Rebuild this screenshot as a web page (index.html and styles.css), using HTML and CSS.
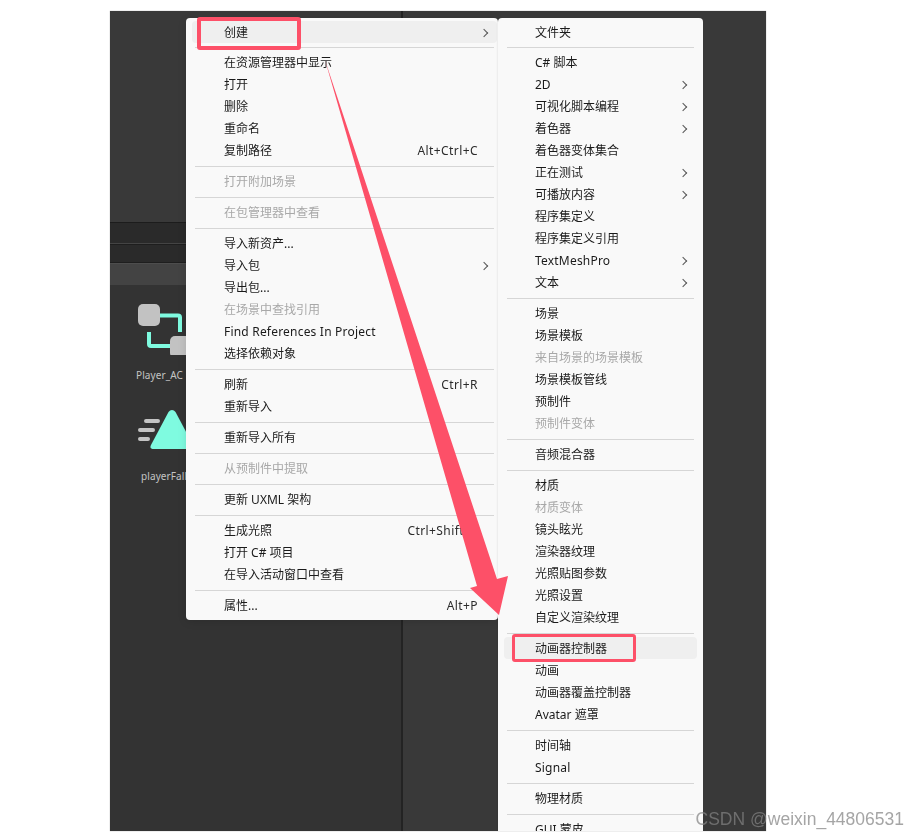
FILE: index.html
```html
<!DOCTYPE html>
<html lang="zh-CN">
<head>
<meta charset="utf-8">
<title>Unity 创建菜单</title>
<link rel="stylesheet" href="styles.css">
</head>
<body>
<main class="shot">
  <div class="editor">
    <div class="bar bar-a"></div>
    <div class="bar bar-b"></div>
    <div class="bar bar-c"></div>
    <div class="pane"></div>
    <div class="divider"></div>
    <figure class="asset asset-ac">
      <svg width="60" height="52" viewBox="0 0 60 52">
        <path d="M20 12.500H41a2 2 0 0 1 2 2V29M12 29V41a2 2 0 0 0 2 2H36" fill="none" stroke="#7ffbe0" stroke-width="4"/>
        <rect x="1" y="1" width="22" height="22" rx="5" fill="#c2c2c2"/>
        <rect x="33" y="33" width="23" height="22" rx="5" fill="#c2c2c2"/>
      </svg>
      <figcaption>Player_AC</figcaption>
    </figure>
    <figure class="asset asset-fall">
      <svg width="60" height="44" viewBox="0 0 60 44">
        <path d="M9 12H21M3 21H16M3 30H11" fill="none" stroke="#c4c4c4" stroke-width="4" stroke-linecap="round"/>
        <path d="M35 1q2 0 3.500 2L56 36q2 4-3 4H17q-5 0-3-4L31.500 3q1.500-2 3.500-2z" fill="#7ffbe0"/>
      </svg>
      <figcaption>playerFall</figcaption>
    </figure>
  </div>

  <nav class="menu menu-left">
    <div class="row row-on"><span>创建</span><i class="chev"></i></div>
    <hr class="sep sep-first">
    <div class="row"><span>在资源管理器中显示</span></div>
    <div class="row"><span>打开</span></div>
    <div class="row"><span>删除</span></div>
    <div class="row"><span>重命名</span></div>
    <div class="row"><span>复制路径</span><kbd>Alt+Ctrl+C</kbd></div>
    <hr class="sep">
    <div class="row off"><span>打开附加场景</span></div>
    <hr class="sep">
    <div class="row off"><span>在包管理器中查看</span></div>
    <hr class="sep">
    <div class="row"><span>导入新资产...</span></div>
    <div class="row"><span>导入包</span><i class="chev"></i></div>
    <div class="row"><span>导出包...</span></div>
    <div class="row off"><span>在场景中查找引用</span></div>
    <div class="row"><span class="latin">Find References In Project</span></div>
    <div class="row"><span>选择依赖对象</span></div>
    <hr class="sep">
    <div class="row"><span>刷新</span><kbd>Ctrl+R</kbd></div>
    <div class="row"><span>重新导入</span></div>
    <hr class="sep">
    <div class="row"><span>重新导入所有</span></div>
    <hr class="sep">
    <div class="row off"><span>从预制件中提取</span></div>
    <hr class="sep">
    <div class="row"><span>更新 UXML 架构</span></div>
    <hr class="sep">
    <div class="row"><span>生成光照</span><kbd>Ctrl+Shift+L</kbd></div>
    <div class="row"><span>打开 C# 项目</span></div>
    <div class="row"><span>在导入活动窗口中查看</span></div>
    <hr class="sep">
    <div class="row"><span>属性...</span><kbd>Alt+P</kbd></div>
  </nav>

  <nav class="menu menu-right">
    <div class="row"><span>文件夹</span></div>
    <hr class="sep sep-first">
    <div class="row"><span>C# 脚本</span></div>
    <div class="row"><span>2D</span><i class="chev"></i></div>
    <div class="row"><span>可视化脚本编程</span><i class="chev"></i></div>
    <div class="row"><span>着色器</span><i class="chev"></i></div>
    <div class="row"><span>着色器变体集合</span></div>
    <div class="row"><span>正在测试</span><i class="chev"></i></div>
    <div class="row"><span>可播放内容</span><i class="chev"></i></div>
    <div class="row"><span>程序集定义</span></div>
    <div class="row"><span>程序集定义引用</span></div>
    <div class="row"><span class="latin">TextMeshPro</span><i class="chev"></i></div>
    <div class="row"><span>文本</span><i class="chev"></i></div>
    <hr class="sep">
    <div class="row"><span>场景</span></div>
    <div class="row"><span>场景模板</span></div>
    <div class="row off"><span>来自场景的场景模板</span></div>
    <div class="row"><span>场景模板管线</span></div>
    <div class="row"><span>预制件</span></div>
    <div class="row off"><span>预制件变体</span></div>
    <hr class="sep">
    <div class="row"><span>音频混合器</span></div>
    <hr class="sep">
    <div class="row"><span>材质</span></div>
    <div class="row off"><span>材质变体</span></div>
    <div class="row"><span>镜头眩光</span></div>
    <div class="row"><span>渲染器纹理</span></div>
    <div class="row"><span>光照贴图参数</span></div>
    <div class="row"><span>光照设置</span></div>
    <div class="row"><span>自定义渲染纹理</span></div>
    <hr class="sep">
    <div class="row row-on"><span>动画器控制器</span></div>
    <div class="row"><span>动画</span></div>
    <div class="row"><span>动画器覆盖控制器</span></div>
    <div class="row"><span>Avatar 遮罩</span></div>
    <hr class="sep">
    <div class="row"><span>时间轴</span></div>
    <div class="row"><span class="latin">Signal</span></div>
    <hr class="sep">
    <div class="row"><span>物理材质</span></div>
    <hr class="sep">
    <div class="row"><span>GUI 蒙皮</span></div>
  </nav>

  <svg class="arrow" width="656" height="820" viewBox="0 0 656 820">
    <path d="M215 49 L367 575 L360 577 L389 604 L398 565 L387 568Z" fill="#fd5068"/>
  </svg>
  <div class="mark mark-create"></div>
  <div class="mark mark-anim"></div>
</main>
<p class="watermark">CSDN @weixin_44806531</p>
</body>
</html>
```
FILE: styles.css
```css
* { box-sizing: border-box; }
html, body { margin: 0; height: 835px; overflow: hidden; background: #fff; }
body { position: relative; font-family: "Noto Sans", "Noto Sans CJK SC", sans-serif; }

.shot {
  position: relative;
  width: 656px;
  height: 820px;
  margin: 11px 0 0 110px;
  overflow: hidden;
  background: #393939;
  box-shadow: 0 0 1px #999;
  filter: blur(.3px);
}
.editor { position: absolute; inset: 0; }
.bar { position: absolute; left: 0; width: 76px; }
.bar-a { top: 211px; height: 22px; background: #2a2a2a; border-top: 1px solid #1c1c1c; border-bottom: 1px solid #444; }
.bar-b { top: 233px; height: 19px; background: #2a2a2a; border-top: 1px solid #1e1e1e; border-bottom: 1px solid #1e1e1e; }
.bar-c { top: 252px; height: 22px; background: #434343; border-top: 1px solid #4d4d4d; }
.pane { position: absolute; left: 0; top: 274px; width: 291px; bottom: 0; background: #333; }
.divider { position: absolute; left: 291px; top: 0; width: 2px; height: 100%; background: #232323; }

.asset { position: absolute; margin: 0; width: 76px; overflow: hidden; color: #c4c4c4; font: 10px/14px "Noto Sans", sans-serif; letter-spacing: .1px; white-space: nowrap; }
.asset svg { display: block; }
.asset-ac { top: 292px; left: 0; padding-left: 27px; }
.asset-ac figcaption { margin: 13px 0 0 -1px; }
.asset-fall { top: 398px; left: 0; padding-left: 27px; }
.asset-fall figcaption { margin: 16px 0 0 4px; }

.menu {
  position: absolute;
  top: 7px;
  padding: 3px 6px;
  background: #f9f9f9;
  border-radius: 4px;
  color: #1a1a1a;
  font-size: 12px;
  line-height: 22px;
}
.menu-left { left: 76px; width: 312px; height: 602px; padding-right: 1px; z-index: 1; box-shadow: 0 2px 8px rgba(0,0,0,.12); }
.menu-right { left: 388px; width: 205px; height: 830px; z-index: 2; box-shadow: -1px 0 2px rgba(0,0,0,.06); }

.row { display: flex; align-items: center; justify-content: space-between; height: 22px; padding: 2px 9px 0 32px; border-radius: 4px; white-space: nowrap; }
.menu-right .row { padding: 2px 10px 0 31px; }
.row-on { background: #efefef; }
.off { color: #a8a8a8; }
.latin { letter-spacing: .2px; }
kbd { font: inherit; color: #2b2b2b; letter-spacing: .42px; padding-right: 10px; }
.chev { width: 6px; height: 6px; border-top: 1.300px solid #555; border-right: 1.300px solid #555; transform: rotate(45deg); margin-right: 1px; }

.sep { display: block; height: 1px; margin: 5px 3px 3px; border: 0; background: #d6d6d6; }
.sep-first { margin: 4px 3px 3px; }

.arrow { position: absolute; inset: 0; z-index: 3; pointer-events: none; }
.mark { position: absolute; z-index: 4; border: 3px solid #fd5068; border-radius: 3px; }
.mark-create { left: 87px; top: 6px; width: 104px; height: 33px; border-width: 4px; }
.mark-anim { left: 402px; top: 623px; width: 124px; height: 28px; }

.watermark {
  position: absolute;
  z-index: 5;
  right: 4px;
  bottom: 6px;
  margin: 0;
  color: rgba(130,130,130,.72);
  font: 17.500px/20px "Liberation Sans", sans-serif;
}
```
